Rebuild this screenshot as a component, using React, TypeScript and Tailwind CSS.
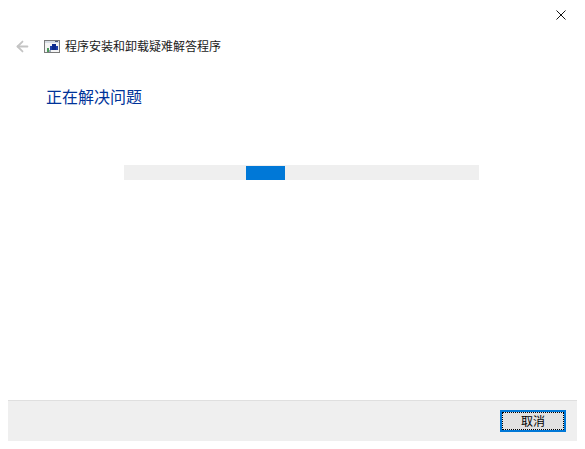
import { ArrowLeft } from 'lucide-react';

function TroubleshooterIcon() {
  return (
    <svg width="16" height="13" viewBox="0 0 16 13" className="block">
      <rect x="0.5" y="0.5" width="15" height="12" fill="#f4f4f4" stroke="#7a7a7a" />
      <rect x="1" y="1" width="14" height="2" fill="#d5dbe3" />
      <rect x="11" y="1" width="3" height="1" fill="#4a5a78" />
      <rect x="6" y="6" width="8" height="4" fill="#1d3fa8" />
      <rect x="8" y="4" width="4" height="6" fill="#0b2a8c" />
      <rect x="3" y="8" width="2" height="4" fill="#4c9a5a" />
      <rect x="5" y="10" width="2" height="2" fill="#9aa7b8" />
    </svg>
  );
}

function CloseIcon() {
  return (
    <svg width="10" height="10" viewBox="0 0 10 10" className="block">
      <path d="M0.5 0.5 L9.5 9.5 M9.5 0.5 L0.5 9.5" stroke="#111" strokeWidth="1" fill="none" />
    </svg>
  );
}

export default function App() {
  return (
    <div className="flex h-[449px] w-[585px] flex-col overflow-hidden bg-white font-['Noto_Sans_CJK_SC','Liberation_Sans',sans-serif]">
      <div className="flex h-[20px] justify-end pr-[19px] pt-[10px]">
        <CloseIcon />
      </div>
      <div className="mt-[14px] flex h-[24px] items-center pl-[14px]">
        <ArrowLeft className="h-[17px] w-[17px] text-[#c4c4c4]" strokeWidth={2.5} />
        <div className="ml-[13px]">
          <TroubleshooterIcon />
        </div>
        <span className="ml-[5px] text-[12px] leading-[16px] text-[#1a1a1a]">程序安装和卸载疑难解答程序</span>
      </div>
      <h1 className="mt-[26px] pl-[46px] text-[16px] leading-[24px] font-normal text-[#003399]">正在解决问题</h1>
      <div className="mt-[57px] ml-[124px] flex h-[15px] w-[355px] items-end bg-[#efefef]">
        <div className="ml-[122px] h-[14px] w-[39px] bg-[#0078d7]" />
      </div>
      <div className="flex-1" />
      <div className="mx-[8px] mb-[8px] flex h-[41px] justify-end border-t border-t-[#dfdfdf] bg-[#efefef] pt-[9px] pr-[11px]">
        <button className="flex h-[22px] w-[66px] items-center justify-center border-2 border-[#0078d7] bg-[#e1e1e1] outline-1 -outline-offset-3 outline-dotted outline-black">
          <span className="text-[12px] leading-[16px] text-black">取消</span>
        </button>
      </div>
    </div>
  );
}
